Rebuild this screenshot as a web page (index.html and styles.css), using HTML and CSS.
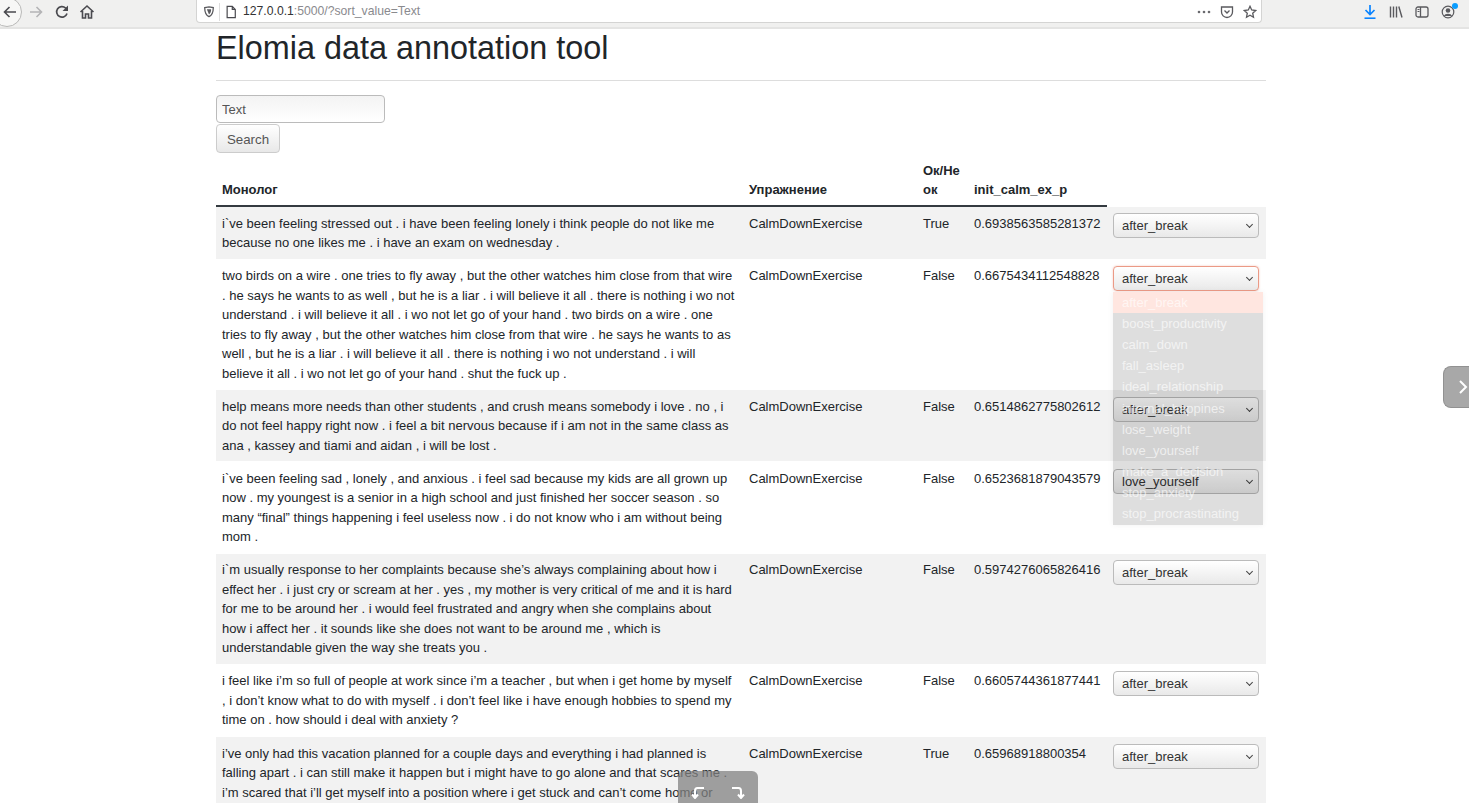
FILE: index.html
```html
<!DOCTYPE html>
<html lang="en">
<head>
  <meta charset="UTF-8" />
  <title>Elomia data annotation tool</title>
  <link rel="stylesheet" href="styles.css">
</head>
<body>

  <div class="toolbar">
    <div class="nav-buttons">
      <span class="back-circle">
        <svg width="16" height="16" viewBox="0 0 16 16"><path d="M14 8H2.5M7.5 3L2.5 8l5 5" fill="none" stroke="#4a4a4f" stroke-width="1.6"/></svg>
      </span>
      <svg class="forward" width="16" height="16" viewBox="0 0 16 16"><path d="M2 8h11.5M8.5 3l5 5-5 5" fill="none" stroke="#b4b4b6" stroke-width="1.6"/></svg>
      <svg class="reload" width="16" height="16" viewBox="0 0 16 16"><path d="M13 9.5A5.3 5.3 0 1 1 11.6 4L13.500 5.800" fill="none" stroke="#4a4a4f" stroke-width="1.7"/><path d="M14 1.500V7H8.500z" fill="#4a4a4f"/></svg>
      <svg class="home" width="16" height="16" viewBox="0 0 16 16"><path d="M1.500 8L8 2l6.500 6M3.500 7v7h3v-4h3v4h3V7" fill="none" stroke="#4a4a4f" stroke-width="1.600"/></svg>
    </div>
    <div class="urlbar">
      <svg width="12" height="13" viewBox="0 0 14 14"><path d="M2 2.500L7 1.500l5 1c0 5-1 8.500-5 10.500C3 11 2 7.500 2 2.500z" fill="none" stroke="#5a5a5e" stroke-width="1.500"/><path d="M4.500 4.500h5C9.500 7.500 8.500 9.500 7 10.500z" fill="#5a5a5e"/></svg>
      <span class="url-sep"></span>
      <svg width="12" height="14" viewBox="0 0 14 16"><path d="M2.500 1.500h6l3.500 3.500v9.500h-9.500zM8.500 1.500V5H12" fill="none" stroke="#4a4a4f" stroke-width="1.400"/></svg>
      <span class="url-text"><b>127.0.0.1</b>:5000/?sort_value=Text</span>
      <span class="url-actions">
        <svg width="14" height="6" viewBox="0 0 14 6"><circle cx="2" cy="3" r="1.300" fill="#6a6a6e"/><circle cx="7" cy="3" r="1.300" fill="#6a6a6e"/><circle cx="12" cy="3" r="1.300" fill="#6a6a6e"/></svg>
        <svg width="14" height="14" viewBox="0 0 14 14"><path d="M1.500 2h11v5a5.500 5.500 0 0 1-11 0z" fill="none" stroke="#5a5a5e" stroke-width="1.300"/><path d="M4.500 5.500L7 8l2.500-2.500" fill="none" stroke="#5a5a5e" stroke-width="1.300"/></svg>
        <svg width="14" height="14" viewBox="0 0 14 14"><path d="M7 1.300l1.700 3.700 4 .5-3 2.700.8 4L7 10.200l-3.500 2 .8-4-3-2.700 4-.5z" fill="none" stroke="#5a5a5e" stroke-width="1.300"/></svg>
      </span>
    </div>
    <div class="tool-icons">
      <svg width="14" height="16" viewBox="0 0 14 16"><path d="M7 1v9M2.500 6L7 10.500 11.500 6" fill="none" stroke="#0a84ff" stroke-width="1.700"/><path d="M1.500 14.200h11" stroke="#0a84ff" stroke-width="1.600"/></svg>
      <svg width="14" height="14" viewBox="0 0 14 14"><path d="M1.500 1.500v11M4.500 1.500v11M7.500 1.500v11M9.800 1.500l3.200 11" fill="none" stroke="#5a5a5e" stroke-width="1.400"/></svg>
      <svg width="14" height="14" viewBox="0 0 14 14"><rect x="1" y="2" width="12" height="10" rx="2" fill="none" stroke="#5a5a5e" stroke-width="1.300"/><path d="M5.500 2v10" stroke="#5a5a5e" stroke-width="1.300"/><path d="M2.500 4.500h2M2.500 6.500h2" stroke="#5a5a5e"/></svg>
      <span class="account">
        <svg width="14" height="14" viewBox="0 0 14 14"><circle cx="7" cy="7" r="5.800" fill="none" stroke="#5a5a5e" stroke-width="1.200"/><circle cx="7" cy="5.500" r="2.300" fill="#5a5a5e"/><path d="M2.800 11a4.500 3.500 0 0 1 8.400 0z" fill="#5a5a5e"/></svg>
        <i class="account-dot"></i>
      </span>
    </div>
  </div>

  <div class="container">
    <h1>Elomia data annotation tool</h1>
    <hr>

    <form class="search-form" onsubmit="event.preventDefault();">
      <input type="text" class="search-input" value="Text">
      <button class="search-btn">Search</button>
    </form>

    <table class="data-table">
      <colgroup>
        <col class="col-text"><col class="col-exercise"><col class="col-ok"><col class="col-prob"><col class="col-select">
      </colgroup>
      <thead>
        <tr>
          <th>Монолог</th>
          <th>Упражнение</th>
          <th>Ок/Не<br>ок</th>
          <th>init_calm_ex_p</th>
          <td class="no-head"></td>
        </tr>
      </thead>
      <tbody>
        <tr>
          <td>i`ve been feeling stressed out . i have been feeling lonely i think people do not like me because no one likes me . i have an exam on wednesday .</td>
          <td>CalmDownExercise</td>
          <td>True</td>
          <td>0.6938563585281372</td>
          <td><div class="select-box">after_break</div></td>
        </tr>
        <tr>
          <td>two birds on a wire . one tries to fly away , but the other watches him close from that wire . he says he wants to as well , but he is a liar . i will believe it all . there is nothing i wo not understand . i will believe it all . i wo not let go of your hand . two birds on a wire . one tries to fly away , but the other watches him close from that wire . he says he wants to as well , but he is a liar . i will believe it all . there is nothing i wo not understand . i will believe it all . i wo not let go of your hand . shut the fuck up .</td>
          <td>CalmDownExercise</td>
          <td>False</td>
          <td>0.6675434112548828</td>
          <td class="open-cell">
            <div class="select-box focused">after_break</div>
            <ul class="select-menu">
              <li class="active">after_break</li>
              <li>boost_productivity</li>
              <li>calm_down</li>
              <li>fall_asleep</li>
              <li>ideal_relationship</li>
              <li>internal_happines</li>
              <li>lose_weight</li>
              <li>love_yourself</li>
              <li>make_a_decision</li>
              <li>stop_anxiety</li>
              <li>stop_procrastinating</li>
            </ul>
          </td>
        </tr>
        <tr>
          <td>help means more needs than other students , and crush means somebody i love . no , i do not feel happy right now . i feel a bit nervous because if i am not in the same class as ana , kassey and tiami and aidan , i will be lost .</td>
          <td>CalmDownExercise</td>
          <td>False</td>
          <td>0.6514862775802612</td>
          <td><div class="select-box">after_break</div></td>
        </tr>
        <tr>
          <td>i`ve been feeling sad , lonely , and anxious . i feel sad because my kids are all grown up now . my youngest is a senior in a high school and just finished her soccer season . so many “final” things happening i feel useless now . i do not know who i am without being mom .</td>
          <td>CalmDownExercise</td>
          <td>False</td>
          <td>0.6523681879043579</td>
          <td><div class="select-box">love_yourself</div></td>
        </tr>
        <tr>
          <td>i`m usually response to her complaints because she’s always complaining about how i effect her . i just cry or scream at her . yes , my mother is very critical of me and it is hard for me to be around her . i would feel frustrated and angry when she complains about how i affect her . it sounds like she does not want to be around me , which is understandable given the way she treats you .</td>
          <td>CalmDownExercise</td>
          <td>False</td>
          <td>0.5974276065826416</td>
          <td><div class="select-box">after_break</div></td>
        </tr>
        <tr>
          <td>i feel like i’m so full of people at work since i’m a teacher , but when i get home by myself , i don’t know what to do with myself . i don’t feel like i have enough hobbies to spend my time on . how should i deal with anxiety ?</td>
          <td>CalmDownExercise</td>
          <td>False</td>
          <td>0.6605744361877441</td>
          <td><div class="select-box">after_break</div></td>
        </tr>
        <tr>
          <td>i’ve only had this vacation planned for a couple days and everything i had planned is falling apart . i can still make it happen but i might have to go alone and that scares me . i’m scared that i’ll get myself into a position where i get stuck and can’t come home or</td>
          <td>CalmDownExercise</td>
          <td>True</td>
          <td>0.65968918800354</td>
          <td><div class="select-box">after_break</div></td>
        </tr>
      </tbody>
    </table>
  </div>

  <div class="side-handle">
    <svg width="10" height="16" viewBox="0 0 10 16"><path d="M2 2l6 6-6 6" fill="none" stroke="#fff" stroke-width="2"/></svg>
  </div>

  <div class="bottom-handle">
    <svg width="14" height="14" viewBox="0 0 14 14"><path d="M13 3H6.500C4.500 3 4 4.500 4 6v7M1 9.500L4 13l3-3.500" fill="none" stroke="#fff" stroke-width="2"/></svg>
    <svg width="14" height="14" viewBox="0 0 14 14"><path d="M1 3h6.500C9.500 3 10 4.500 10 6v7M13 9.500L10 13l-3-3.500" fill="none" stroke="#fff" stroke-width="2"/></svg>
  </div>

</body>
</html>
```

FILE: styles.css
```css
html,
body {
  height: 803px;
  overflow: hidden;
}

body {
  margin: 0;
  background-color: #fff;
  color: #212529;
  font-family: "Liberation Sans", Arial, sans-serif;
  font-size: 13px;
  line-height: 19.5px;
}

/* browser chrome */
.toolbar {
  display: flex;
  align-items: center;
  height: 24px;
  padding-bottom: 3px;
  background-color: #f0f0ef;
  border-bottom: 2px solid #e4e4e3;
  overflow: hidden;
}

.nav-buttons {
  display: flex;
  align-items: center;
  width: 196px;
  flex-shrink: 0;
}

.back-circle {
  display: flex;
  align-items: center;
  justify-content: center;
  width: 30px;
  height: 30px;
  margin-left: -8px;
  padding-left: 6px;
  box-sizing: border-box;
  background-color: #f7f7f6;
  border: 1px solid #b9b9b8;
  border-radius: 50%;
}

.forward {
  margin-left: 6px;
}

.reload {
  margin-left: 10px;
}

.home {
  margin-left: 9px;
}

.urlbar {
  display: flex;
  align-items: center;
  align-self: flex-start;
  width: 1066px;
  height: 23px;
  padding: 1px 4px 0 6px;
  box-sizing: border-box;
  background-color: #fff;
  border: 1px solid #d4d4d3;
  border-top: none;
  border-radius: 0 0 4px 4px;
  flex-shrink: 0;
}

.url-sep {
  width: 1px;
  height: 18px;
  margin: 0 5px 0 4px;
  background-color: #ddd;
}

.url-text {
  margin-left: 6px;
  font-size: 12.200px;
  color: #8a8a8e;
}

.url-text b {
  font-weight: normal;
  color: #333;
}

.url-actions {
  display: flex;
  align-items: center;
  gap: 9px;
  margin-left: auto;
}

.tool-icons {
  display: flex;
  align-items: center;
  gap: 12px;
  margin-left: 101px;
}

.account {
  position: relative;
  display: flex;
}

.account-dot {
  position: absolute;
  top: -2px;
  right: -3px;
  width: 6px;
  height: 6px;
  background-color: #0a9dff;
  border-radius: 50%;
}

/* page */
.container {
  width: 1050px;
  margin-left: 216px;
}

h1 {
  margin: 0;
  font-size: 32.400px;
  font-weight: 400;
  line-height: 39px;
}

hr {
  margin: 12px 0 14px;
  border: 0;
  border-top: 1px solid #ddd;
}

.search-input {
  display: block;
  width: 169px;
  height: 28px;
  padding: 0 5px;
  box-sizing: border-box;
  font: 13px "Liberation Sans", Arial, sans-serif;
  color: #555;
  background: linear-gradient(#f3f3f3, #fff);
  border: 1px solid #bbb;
  border-radius: 4px;
}

.search-btn {
  display: block;
  height: 29px;
  width: 64px;
  margin-top: 1px;
  padding: 1px 0 0;
  font: 13.300px "Liberation Sans", Arial, sans-serif;
  color: #555;
  background: linear-gradient(#fff, #e8e8e8);
  border: 1px solid #ccc;
  border-radius: 4px;
}

.data-table {
  width: 1050px;
  table-layout: fixed;
  border-collapse: collapse;
}

.col-text { width: 527px; }
.col-exercise { width: 174px; }
.col-ok { width: 51px; }
.col-prob { width: 139px; }
.col-select { width: 159px; }

.data-table th {
  padding: 7.500px 6px 5.500px;
  text-align: left;
  vertical-align: bottom;
  border-bottom: 2px solid #343a40;
}

.data-table td {
  padding: 6.500px 6px 6.100px;
  vertical-align: top;
  border-top: 1px solid #fff;
}

.data-table td.no-head {
  border: none;
}

.data-table tbody tr:nth-child(odd) {
  background-color: #f2f2f2;
}

.data-table td:last-child {
  padding-right: 7px;
}

.open-cell {
  position: relative;
}

.select-box {
  position: relative;
  height: 25px;
  line-height: 23px;
  padding: 0 8px;
  box-sizing: border-box;
  color: #333;
  background: linear-gradient(#fff, #e9e9e9);
  border: 1px solid #bbb;
  border-radius: 4px;
}

.select-box::after {
  content: "";
  position: absolute;
  top: 8px;
  right: 6px;
  width: 4px;
  height: 4px;
  border-right: 1.500px solid #444;
  border-bottom: 1.500px solid #444;
  transform: rotate(45deg);
}

.select-box.focused {
  border-color: #eb9a86;
  box-shadow: 0 0 2px rgba(235, 130, 105, 0.5);
}

.select-menu {
  position: absolute;
  top: 32px;
  left: 6px;
  z-index: 1;
  width: 150px;
  margin: 0;
  padding: 0;
  list-style: none;
  background-color: rgba(0, 0, 0, 0.13);
  color: rgba(255, 255, 255, 0.65);
  box-shadow: 0 0 6px rgba(0, 0, 0, 0.06);
}

.select-menu li {
  height: 21.200px;
  line-height: 21.200px;
  padding-left: 9px;
}

.select-menu li.active {
  background-color: #ffe6e0;
}

/* overlay handles */
.side-handle {
  position: absolute;
  top: 366px;
  left: 1443px;
  display: flex;
  align-items: center;
  justify-content: flex-end;
  width: 26px;
  height: 42px;
  padding-right: 1px;
  box-sizing: border-box;
  background-color: #a8a8a8;
  border: 1px solid #919191;
  border-right: none;
  border-radius: 8px 0 0 8px;
}

.bottom-handle {
  position: absolute;
  top: 771px;
  left: 678px;
  display: flex;
  justify-content: center;
  gap: 26px;
  width: 80px;
  height: 32px;
  padding-top: 14px;
  box-sizing: border-box;
  background-color: rgba(130, 130, 130, 0.75);
  border-radius: 6px 6px 0 0;
}
```
